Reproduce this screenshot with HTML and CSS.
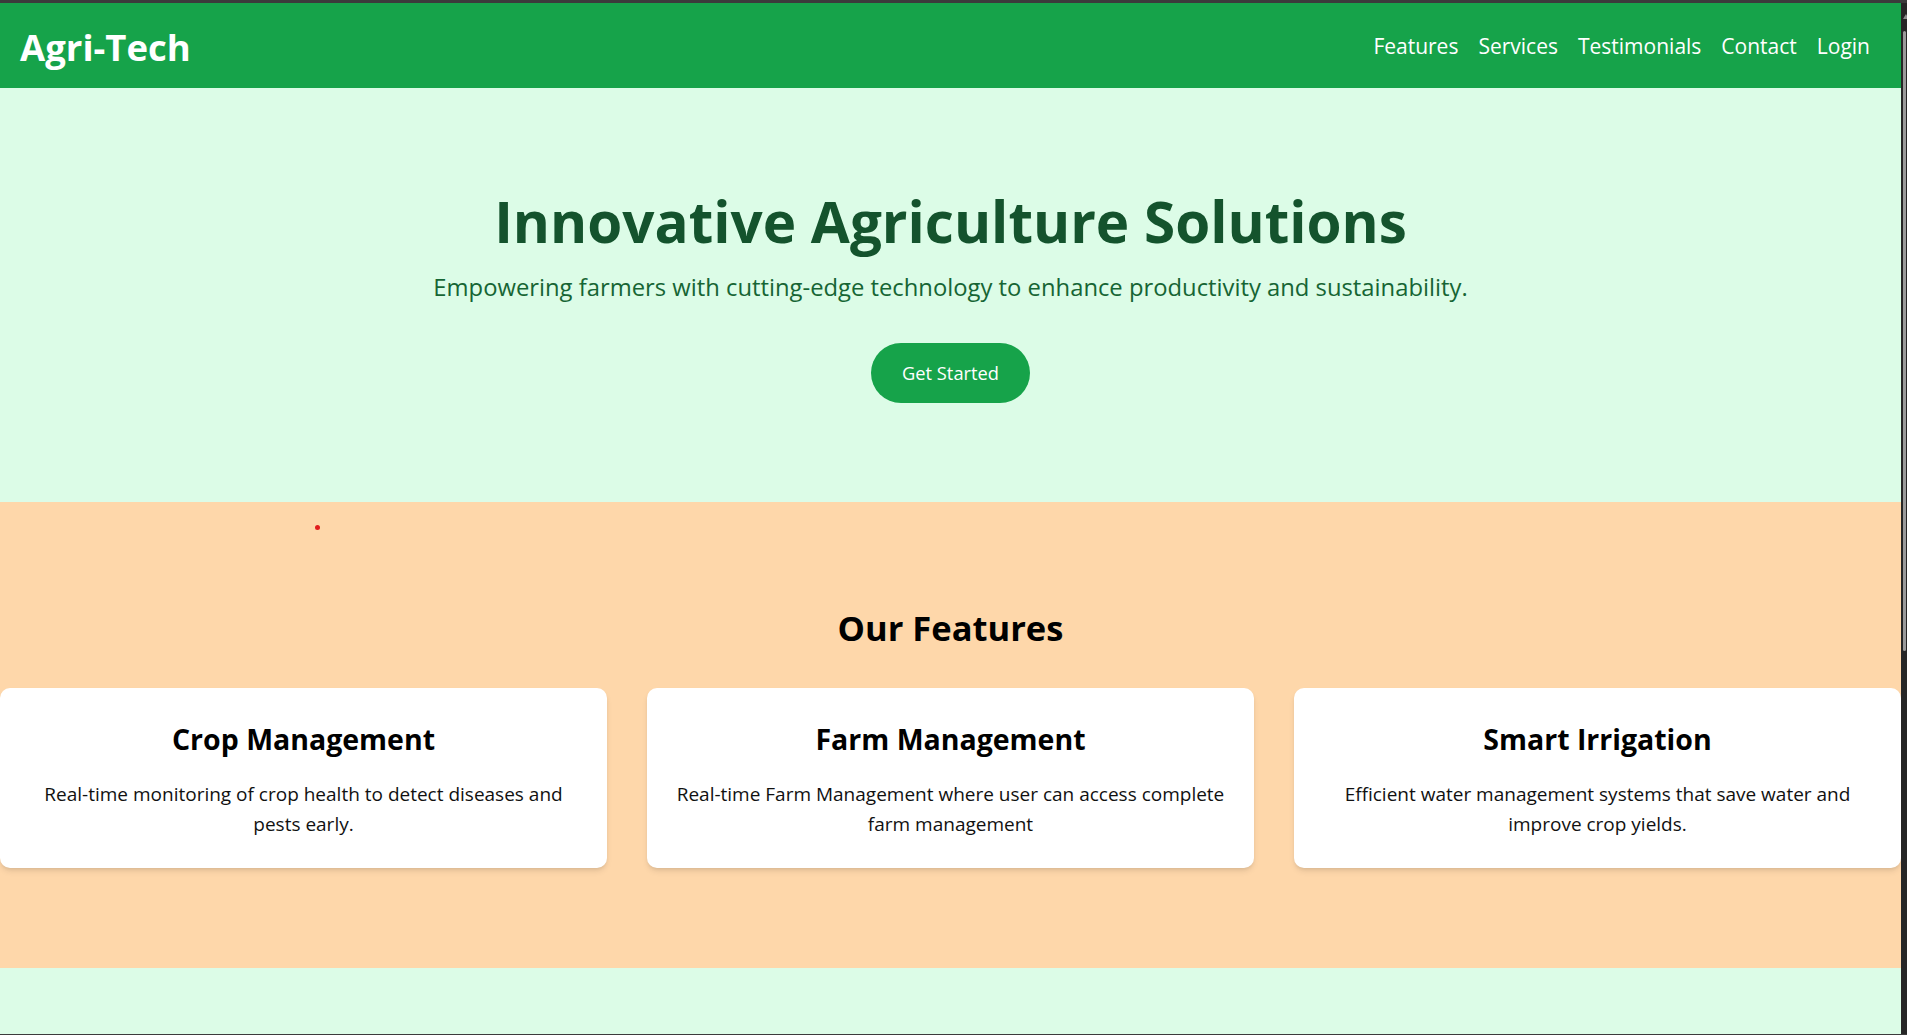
FILE: index.html
```html
<!DOCTYPE html>
<html lang="en">
<head>
<meta charset="utf-8">
<title>Agri-Tech</title>
<link rel="stylesheet" href="styles.css">
</head>
<body>
<div class="page">
  <header class="topbar">
    <div class="logo">Agri-Tech</div>
    <nav class="nav">
      <a href="#features">Features</a>
      <a href="#services">Services</a>
      <a href="#testimonials">Testimonials</a>
      <a href="#contact">Contact</a>
      <a href="#login">Login</a>
    </nav>
  </header>

  <section class="hero">
    <h1 class="hero-title">Innovative Agriculture Solutions</h1>
    <p class="hero-sub">Empowering farmers with cutting-edge technology to enhance productivity and sustainability.</p>
    <a class="btn" href="#start">Get Started</a>
  </section>

  <section class="features" id="features">
    <span class="dot"></span>
    <h2 class="section-title">Our Features</h2>
    <div class="cards">
      <div class="card">
        <h3 class="card-title">Crop Management</h3>
        <p class="card-text">Real-time monitoring of crop health to detect diseases and pests early.</p>
      </div>
      <div class="card">
        <h3 class="card-title">Farm Management</h3>
        <p class="card-text">Real-time Farm Management where user can access complete farm management</p>
      </div>
      <div class="card">
        <h3 class="card-title">Smart Irrigation</h3>
        <p class="card-text">Efficient water management systems that save water and improve crop yields.</p>
      </div>
    </div>
  </section>

  <section class="next"></section>
</div>
<div class="scrollbar"><div class="scroll-arrow"></div><div class="scroll-thumb"></div></div>
</body>
</html>
```
FILE: styles.css
```css
* { box-sizing: border-box; }

html, body {
  margin: 0;
  height: 1035px;
  overflow: hidden;
}

body {
  display: flex;
  background: #3a3a3a;
  border-top: 3px solid #3b3b3b;
  border-bottom: 1px solid #3b3b3b;
  font-family: "Open Sans", "Noto Sans", sans-serif;
  color: #111;
}

.page {
  flex: 1;
  min-width: 0;
  overflow: hidden;
  background: #dcfce7;
}

.scrollbar {
  width: 6px;
  background: #262626;
  position: relative;
}
.scroll-arrow {
  position: absolute;
  left: 2px;
  top: 11px;
  width: 0;
  height: 0;
  border-left: 3px solid transparent;
  border-right: 3px solid transparent;
  border-bottom: 5px solid #8c8c8c;
}
.scroll-thumb {
  position: absolute;
  left: 2px;
  top: 28px;
  width: 3px;
  height: 620px;
  background: #9a9a9a;
  border-radius: 2px;
}

/* Header */
.topbar {
  height: 85px;
  background: #16a34a;
  display: flex;
  align-items: center;
  justify-content: space-between;
  padding: 0 31px 0 20px;
}
.logo {
  color: #fff;
  font-weight: 700;
  font-size: 36.5px;
  line-height: 44px;
  margin-top: 3px;
}
.nav {
  display: flex;
  gap: 20px;
}
.nav a {
  color: #fff;
  text-decoration: none;
  font-size: 21px;
  line-height: 28px;
}

/* Hero */
.hero {
  display: flex;
  flex-direction: column;
  align-items: center;
  text-align: center;
  padding: 99px 20px 99px;
  background: #dcfce7;
}
.hero-title {
  margin: 0;
  font-size: 56.6px;
  line-height: 70px;
  font-weight: 700;
  color: #14532d;
}
.hero-sub {
  margin: 12px 0 0;
  font-size: 23.8px;
  line-height: 36px;
  color: #166534;
}
.btn {
  margin-top: 38px;
  display: block;
  height: 60px;
  line-height: 60px;
  padding: 0 31px;
  border-radius: 30px;
  background: #16a34a;
  color: #fff;
  font-size: 18.3px;
  text-decoration: none;
}

/* Features */
.features {
  position: relative;
  background: #fed7aa;
  padding: 104px 0 100px;
  text-align: center;
}
.dot {
  position: absolute;
  left: 315px;
  top: 23px;
  width: 5px;
  height: 5px;
  border-radius: 50%;
  background: #e11d1d;
}
.section-title {
  margin: 0 0 38px;
  font-size: 34.5px;
  line-height: 44px;
  font-weight: 700;
  color: #000;
}
.cards {
  display: grid;
  grid-template-columns: repeat(3, 1fr);
  gap: 40px;
}
.card {
  background: #fff;
  border-radius: 10px;
  padding: 31px 24px 29px;
  box-shadow: 0 4px 6px -1px rgba(0, 0, 0, 0.1), 0 2px 4px -2px rgba(0, 0, 0, 0.1);
}
.card-title {
  margin: 0;
  font-size: 28.5px;
  line-height: 40px;
  font-weight: 700;
  color: #000;
}
.card-text {
  margin: 20px 0 0;
  font-size: 19px;
  line-height: 30px;
  color: #111;
}

.next {
  height: 200px;
  background: #dcfce7;
}
```
